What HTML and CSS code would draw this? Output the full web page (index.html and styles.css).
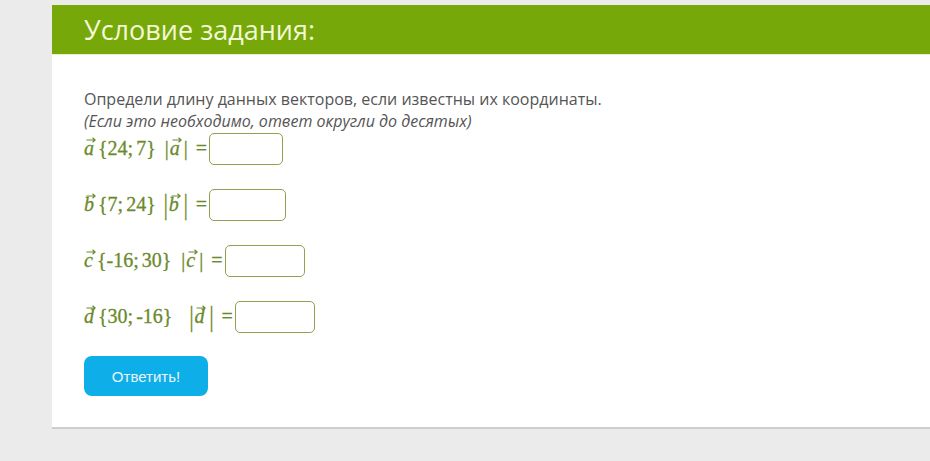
FILE: index.html
```html
<!DOCTYPE html>
<html lang="ru">
<head>
<meta charset="utf-8">
<link rel="stylesheet" href="styles.css">
</head>
<body>
<div class="card">
  <div class="card-head">Условие задания:</div>
  <div class="card-body">
    <p class="task">Определи длину данных векторов, если известны их координаты.</p>
    <p class="note">(Если это необходимо, ответ округли до десятых)</p>
    <div class="row">
      <span class="vec">a<svg class="arr" viewBox="0 0 10 6"><path d="M0.5 3H9M6.5 0.8L9.2 3L6.5 5.2"/></svg></span><span class="br">{</span>24<span class="semi">;</span>7<span class="br">}</span>
      <span class="abs">|</span><span class="vec">a<svg class="arr" viewBox="0 0 10 6"><path d="M0.5 3H9M6.5 0.8L9.2 3L6.5 5.2"/></svg></span><span class="abs2">|</span>
      <span class="eq">=</span><span class="inp w74"></span>
    </div>
    <div class="row">
      <span class="vec">b<svg class="arr" viewBox="0 0 10 6"><path d="M0.5 3H9M6.5 0.8L9.2 3L6.5 5.2"/></svg></span><span class="br">{</span>7<span class="semi">;</span>24<span class="br">}</span>
      <span class="abs tall">|</span><span class="vec">b<svg class="arr" viewBox="0 0 10 6"><path d="M0.5 3H9M6.5 0.8L9.2 3L6.5 5.2"/></svg></span><span class="abs2 tall">|</span>
      <span class="eq">=</span><span class="inp w76"></span>
    </div>
    <div class="row">
      <span class="vec">c<svg class="arr" viewBox="0 0 10 6"><path d="M0.5 3H9M6.5 0.8L9.2 3L6.5 5.2"/></svg></span><span class="br">{</span>-16<span class="semi">;</span>30<span class="br">}</span>
      <span class="abs abs-c">|</span><span class="vec">c<svg class="arr" viewBox="0 0 10 6"><path d="M0.5 3H9M6.5 0.8L9.2 3L6.5 5.2"/></svg></span><span class="abs2">|</span>
      <span class="eq">=</span><span class="inp w80"></span>
    </div>
    <div class="row">
      <span class="vec">d<svg class="arr" viewBox="0 0 10 6"><path d="M0.5 3H9M6.5 0.8L9.2 3L6.5 5.2"/></svg></span><span class="br">{</span>30<span class="semi">;</span>-16<span class="br">}</span>
      <span class="abs tall wide">|</span><span class="vec">d<svg class="arr" viewBox="0 0 10 6"><path d="M0.5 3H9M6.5 0.8L9.2 3L6.5 5.2"/></svg></span><span class="abs2 tall">|</span>
      <span class="eq">=</span><span class="inp w80"></span>
    </div>
    <button class="btn">Ответить!</button>
  </div>
</div>
</body>
</html>
```
FILE: styles.css
```css
html, body {
  margin: 0;
  padding: 0;
  background: #ebebeb;
  height: 100%;
  overflow: hidden;
}
.card {
  margin: 5px 0 0 52px;
  background: #ffffff;
  height: 422px;
  border-bottom: 2px solid #cdcdcd;
}
.card-head {
  height: 50px;
  background: #76a80a;
  color: #f3f8d6;
  font-family: "Open Sans", sans-serif;
  font-size: 27px;
  line-height: 50px;
  padding-left: 32px;
  border-bottom: 1px solid #e9f3c8;
  box-sizing: border-box;
}
.card-body {
  padding: 33px 0 0 32px;
}
.task, .note {
  margin: 0;
  font-family: "Open Sans", sans-serif;
  font-size: 16px;
  line-height: 22px;
  color: #555555;
}
.note {
  font-style: italic;
}
.row {
  display: flex;
  align-items: center;
  height: 33px;
  margin-bottom: 23px;
  font-family: "Liberation Serif", "DejaVu Serif", serif;
  font-size: 20px;
  color: #6b8a2c;
  white-space: pre;
  -webkit-text-stroke: 0.3px #6b8a2c;
}
.vec {
  position: relative;
  font-style: italic;
  display: inline-block;
  margin-right: 4px;
}
.arr {
  position: absolute;
  top: 0px;
  left: 2px;
  width: 10px;
  height: 6px;
  fill: none;
  stroke: #6b8a2c;
  stroke-width: 1.2;
}
.br { margin: 0; }
.semi { margin-right: 3px; }
.abs { margin-left: 9px; margin-right: 1px; }
.abs.abs-c { margin-left: 10px; }
.abs2 { margin-left: 0; }
.abs.tall { margin-left: 8px; margin-right: 1px; }
.abs.tall.wide { margin-left: 17px; }
.abs2.tall { margin-left: 1px; }
.tall { transform: scaleY(1.45); }
.eq { margin-left: 8px; margin-right: 2px; }
.inp {
  display: inline-block;
  height: 32px;
  border: 1px solid #8fa34f;
  border-radius: 5px;
  box-sizing: border-box;
  background: #fff;
  -webkit-text-stroke: 0;
}
.w74 { width: 74px; }
.w76 { width: 77px; }
.w80 { width: 80px; }
.btn {
  margin-top: 0;
  width: 124px;
  height: 40px;
  border: none;
  border-radius: 8px;
  background: #0eaee9;
  color: #eaf6fc;
  font-family: "Liberation Sans", Arial, sans-serif;
  font-size: 15px;
}
```
